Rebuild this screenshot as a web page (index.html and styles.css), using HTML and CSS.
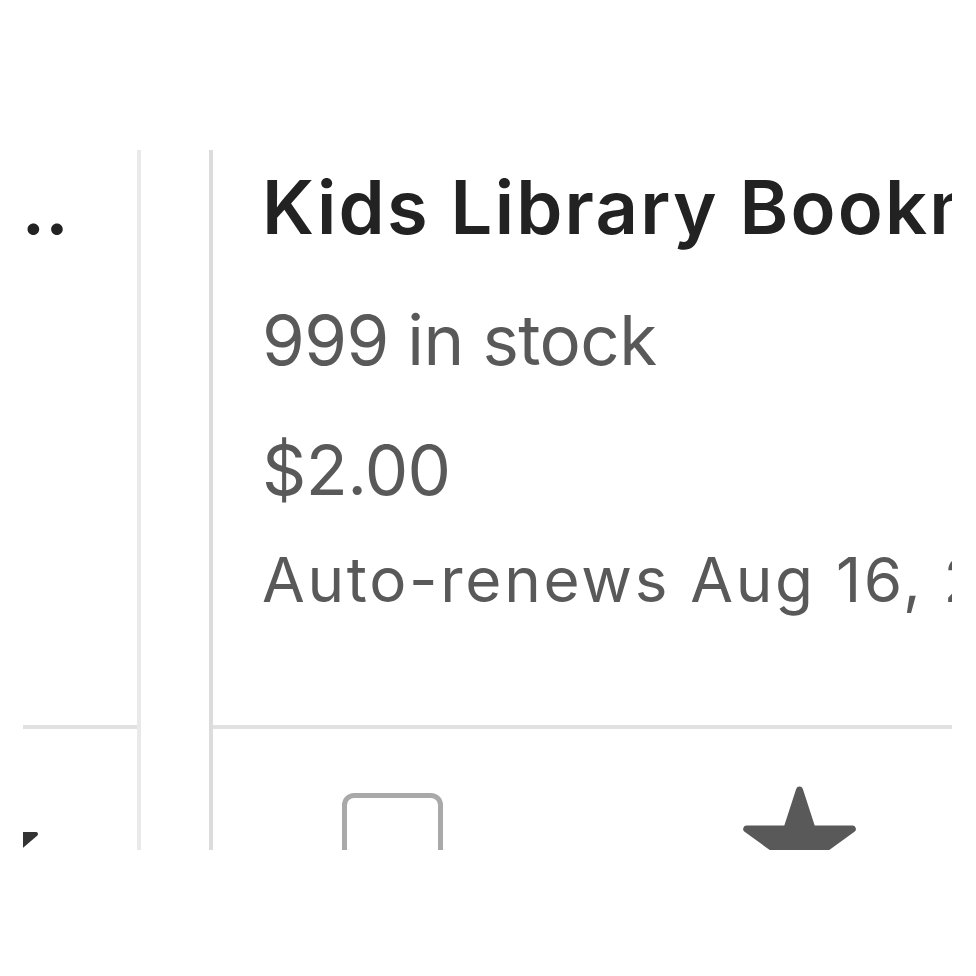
FILE: index.html
```html
<!DOCTYPE html>
<html lang="en">
<head>
<meta charset="utf-8">
<title>Listings</title>
<link rel="stylesheet" href="styles.css">
</head>
<body>
<div class="frame">
  <div class="grid">
    <div class="card card--prev">
      <div class="card-body">
        <div class="title">Magnetic Bookmarks for Kids, Set of 4 Animals</div>
        <div class="meta meta--stock">999 in stock</div>
        <div class="meta meta--price">$3.00</div>
        <div class="renew">Auto-renews Aug 16, 2024</div>
      </div>
      <div class="card-footer">
        <span class="checkbox"></span>
        <svg class="star" viewBox="0 0 24 24" aria-hidden="true"><path d="M19.985 10.36a.5.5 0 0 0-.477-.352h-5.351l-1.681-5.174a.5.5 0 0 0-.951 0L9.844 10.008H4.493a.5.5 0 0 0-.294.9l4.332 3.128-1.658 5.147a.5.5 0 0 0 .771.552L12 16.6l4.356 3.135a.5.5 0 0 0 .771-.552l-1.658-5.146 4.331-3.125a.5.5 0 0 0 .185-.552z"/></svg>
        <div class="menu">
          <svg class="gear" viewBox="0 0 24 24" aria-hidden="true"><path d="M12 8.5a3.5 3.5 0 1 0 0 7 3.5 3.5 0 0 0 0-7zm8.3 5.1-1.6-.9a6.9 6.9 0 0 0 0-1.4l1.6-.9a.6.6 0 0 0 .3-.7l-1.6-2.8a.6.6 0 0 0-.7-.3l-1.6.9a7 7 0 0 0-1.2-.7V4.9a.6.6 0 0 0-.6-.6h-3.2a.6.6 0 0 0-.6.6v1.8a7 7 0 0 0-1.2.7l-1.6-.9a.6.6 0 0 0-.7.3L3.4 9.6a.6.6 0 0 0 .3.7l1.6.9a6.9 6.9 0 0 0 0 1.4l-1.6.9a.6.6 0 0 0-.3.7l1.6 2.8a.6.6 0 0 0 .7.3l1.6-.9a7 7 0 0 0 1.2.7v1.8a.6.6 0 0 0 .6.6h3.2a.6.6 0 0 0 .6-.6v-1.8a7 7 0 0 0 1.2-.7l1.6.9a.6.6 0 0 0 .7-.3l1.6-2.8a.6.6 0 0 0-.3-.7z"/></svg>
          <svg class="caret" viewBox="0 0 32 16" aria-hidden="true"><path d="M2 0h28a2 2 0 0 1 1.4 3.4L17.4 15.4a2 2 0 0 1-2.8 0L.6 3.4A2 2 0 0 1 2 0z"/></svg>
        </div>
      </div>
    </div>
    <div class="card">
      <div class="card-body">
        <div class="title">Kids Library Bookmarks, Set of 5</div>
        <div class="meta meta--stock">999 in stock</div>
        <div class="meta meta--price">$2.00</div>
        <div class="renew">Auto-renews Aug 16, 2024</div>
      </div>
      <div class="card-footer">
        <span class="checkbox"></span>
        <svg class="star" viewBox="0 0 24 24" aria-hidden="true"><path d="M19.985 10.36a.5.5 0 0 0-.477-.352h-5.351l-1.681-5.174a.5.5 0 0 0-.951 0L9.844 10.008H4.493a.5.5 0 0 0-.294.9l4.332 3.128-1.658 5.147a.5.5 0 0 0 .771.552L12 16.6l4.356 3.135a.5.5 0 0 0 .771-.552l-1.658-5.146 4.331-3.125a.5.5 0 0 0 .185-.552z"/></svg>
        <div class="menu">
          <svg class="gear" viewBox="0 0 24 24" aria-hidden="true"><path d="M12 8.5a3.5 3.5 0 1 0 0 7 3.5 3.5 0 0 0 0-7zm8.3 5.1-1.6-.9a6.9 6.9 0 0 0 0-1.4l1.6-.9a.6.6 0 0 0 .3-.7l-1.6-2.8a.6.6 0 0 0-.7-.3l-1.6.9a7 7 0 0 0-1.2-.7V4.9a.6.6 0 0 0-.6-.6h-3.2a.6.6 0 0 0-.6.6v1.8a7 7 0 0 0-1.2.7l-1.6-.9a.6.6 0 0 0-.7.3L3.4 9.6a.6.6 0 0 0 .3.7l1.6.9a6.9 6.9 0 0 0 0 1.4l-1.6.9a.6.6 0 0 0-.3.7l1.6 2.8a.6.6 0 0 0 .7.3l1.6-.9a7 7 0 0 0 1.2.7v1.8a.6.6 0 0 0 .6.6h3.2a.6.6 0 0 0 .6-.6v-1.8a7 7 0 0 0 1.2-.7l1.6.9a.6.6 0 0 0 .7-.3l1.6-2.8a.6.6 0 0 0-.3-.7z"/></svg>
          <svg class="caret" viewBox="0 0 32 16" aria-hidden="true"><path d="M2 0h28a2 2 0 0 1 1.4 3.4L17.4 15.4a2 2 0 0 1-2.8 0L.6 3.4A2 2 0 0 1 2 0z"/></svg>
        </div>
      </div>
    </div>
  </div>
</div>
</body>
</html>
```
FILE: styles.css
```css
* { box-sizing: border-box; }

html, body {
  margin: 0;
  padding: 0;
  background: #ffffff;
}

body {
  font-family: Inter, "Noto Sans", "Liberation Sans", sans-serif;
  color: #222222;
}

.frame {
  margin: 150px 0 0 23px;
  width: 929px;
  height: 700px;
  overflow: hidden;
  background: #ffffff;
}

.grid {
  display: flex;
  gap: 68px;
  margin-left: -1024px;
  margin-top: -4px;
}

.card {
  flex: 0 0 1142px;
  width: 1142px;
  border: 4px solid #dcdcdc;
  background: #ffffff;
}

.card--prev {
  border-color: #e9e9e9;
}

.card-body {
  padding: 13px 49px 109px;
}

.title {
  font-size: 74px;
  line-height: 88px;
  font-weight: 600;
  color: #222222;
  white-space: nowrap;
  overflow: hidden;
  text-overflow: ellipsis;
  letter-spacing: 2.2px;
}

.meta {
  font-size: 69px;
  line-height: 80px;
  color: #595959;
  letter-spacing: -0.6px;
}

.meta--stock { margin-top: 49px; }
.meta--price { margin-top: 50px; }

.renew {
  margin-top: 34px;
  font-size: 62px;
  line-height: 72px;
  color: #595959;
  white-space: nowrap;
  letter-spacing: 2.7px;
}

.card-footer {
  border-top: 4px solid #e1e1e1;
  display: flex;
  align-items: flex-start;
  height: 260px;
}

.checkbox {
  display: block;
  flex: 0 0 auto;
  width: 101px;
  height: 101px;
  margin: 64px 0 0 129px;
  border: 5px solid #a9a9a9;
  border-radius: 12px;
}

.star {
  display: block;
  flex: 0 0 auto;
  width: 169px;
  height: 169px;
  margin: 26px 0 0 272px;
  fill: #595959;
}

.menu {
  margin-left: auto;
  margin-right: 99px;
  display: flex;
  align-items: flex-start;
  gap: 12px;
}

.gear {
  display: block;
  width: 120px;
  height: 120px;
  margin-top: 46px;
  fill: #222222;
}

.caret {
  display: block;
  width: 32px;
  height: 16px;
  margin-top: 103px;
  fill: #333333;
}
```
